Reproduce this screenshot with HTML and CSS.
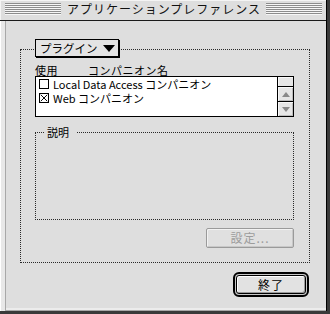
FILE: index.html
```html
<!DOCTYPE html>
<html lang="ja">
<head>
<meta charset="utf-8">
<link rel="stylesheet" href="styles.css">
</head>
<body>
<div class="window">
  <div class="titlebar">
    <div class="stripes"><span class="title">アプリケーションプレファレンス</span></div>
  </div>
  <div class="content">
    <div class="group">
      <div class="popup"><span class="popup-label">プラグイン</span><svg class="tri" width="12" height="7" viewBox="0 0 12 7"><path d="M0 0H12L6 7Z" fill="#000"/></svg></div>
      <div class="headers"><span class="h-use">使用</span><span>コンパニオン名</span></div>
      <div class="list">
        <div class="rows">
          <div class="row"><span class="cb"></span><span class="row-text">Local Data Access コンパニオン</span></div>
          <div class="row"><span class="cb"><svg width="10" height="10" viewBox="0 0 10 10"><path d="M1 1L9 9M9 1L1 9" stroke="#000" stroke-width="1.2"/></svg></span><span class="row-text">Web コンパニオン</span></div>
        </div>
        <div class="scroll">
          <div class="sb-top"></div>
          <div class="sb-btn"><svg width="8" height="5" viewBox="0 0 8 5"><path d="M0 5H8L4 0Z" fill="#8a8a8a"/></svg></div>
          <div class="sb-btn last"><svg width="8" height="5" viewBox="0 0 8 5"><path d="M0 0H8L4 5Z" fill="#8a8a8a"/></svg></div>
        </div>
      </div>
      <div class="desc"><span class="legend">説明</span></div>
      <div class="actions"><div class="btn disabled">設定...</div></div>
    </div>
    <div class="footer">
      <div class="default-ring"><div class="btn primary">終了</div></div>
    </div>
  </div>
</div>
</body>
</html>
```
FILE: styles.css
```css
html, body {
  margin: 0;
  padding: 0;
}
body {
  width: 330px;
  height: 314px;
  background: #3a3a3a;
  font-family: "Noto Sans CJK JP", "DejaVu Sans", sans-serif;
  font-size: 12px;
  color: #000;
  overflow: hidden;
}
.window {
  width: 326px;
  height: 311px;
  background: #dedede;
  border-right: 1px solid #000;
  display: flex;
  flex-direction: column;
}
.titlebar {
  height: 20px;
  border-bottom: 1px solid #1a1a1a;
  background: #dedede;
  box-shadow: inset 1px 1px 0 #f4f4f4;
  display: flex;
  flex-direction: column;
}
.stripes {
  margin: 3px 4px 0 5px;
  height: 12px;
  background: repeating-linear-gradient(to bottom, #8c8c8c 0 1px, #f6f6f6 1px 2px);
  display: flex;
  justify-content: center;
  align-items: center;
}
.title {
  background: #dedede;
  padding: 0 5px 0 6px;
  line-height: 12px;
  height: 12px;
  letter-spacing: 1px;
  color: #111;
  white-space: nowrap;
}
.content {
  flex: 1;
  border-left: 1px solid #fff;
  box-shadow: inset 4px 0 0 #e8e8e8, inset 5px 0 0 #a8a8a8, inset 0 -1px 0 #a8a8a8, inset 0 -3px 0 #ececec;
  display: flex;
  flex-direction: column;
}
.group {
  margin: 28px 0 0 19px;
  width: 290px;
  height: 214px;
  box-sizing: border-box;
  border: 1px dotted #2a2a2a;
  padding: 0 15px 0 14px;
  display: flex;
  flex-direction: column;
}
.popup {
  margin-top: -11px;
  width: 84px;
  height: 18px;
  box-sizing: border-box;
  border: 1px solid #000;
  box-shadow: 1px 1px 0 #000;
  background: #e4e4e4;
  display: flex;
  align-items: center;
  padding: 0 3px 0 4px;
  justify-content: space-between;
  line-height: 14px;
  white-space: nowrap;
}
.popup-label {
  font-size: 11.5px;
}
.tri {
  display: block;
  flex: none;
}
.headers {
  margin-top: 7px;
  height: 12px;
  line-height: 12px;
  font-size: 11px;
  display: flex;
  letter-spacing: 0.5px;
  white-space: nowrap;
}
.h-use {
  width: 53px;
}
.list {
  height: 41px;
  box-sizing: border-box;
  border: 1px solid #000;
  background: #fff;
  display: flex;
}
.rows {
  flex: 1;
  padding: 2px 0 0 3px;
}
.row {
  height: 14px;
  display: flex;
  align-items: flex-start;
  gap: 4px;
  white-space: nowrap;
}
.row-text {
  line-height: 11px;
  font-size: 11px;
}
.cb {
  width: 10px;
  height: 10px;
  box-sizing: border-box;
  border: 1px solid #000;
  background: #fff;
  display: flex;
  align-items: center;
  justify-content: center;
  flex: none;
}
.cb svg {
  display: block;
}
.scroll {
  width: 15px;
  border-left: 1px solid #000;
  background: #e6e6e6;
  display: flex;
  flex-direction: column;
}
.sb-top {
  height: 9px;
  border-bottom: 1px solid #000;
  box-shadow: inset 1px 1px 0 #f8f8f8;
}
.sb-btn {
  height: 14px;
  border-bottom: 1px solid #000;
  display: flex;
  align-items: center;
  justify-content: center;
  box-shadow: inset 1px 1px 0 #f8f8f8, inset -1px -1px 0 #bdbdbd;
}
.sb-btn.last {
  border-bottom: none;
  flex: 1;
}
.desc {
  margin-top: 15px;
  height: 88px;
  box-sizing: border-box;
  border: 1px dotted #2a2a2a;
  display: flex;
  align-items: flex-start;
}
.legend {
  margin: -8px 0 0 8px;
  padding: 0 8px 0 3px;
  background: #dedede;
  line-height: 14px;
  font-size: 11px;
}
.actions {
  margin-top: 8px;
  display: flex;
  justify-content: flex-end;
}
.btn {
  box-sizing: border-box;
  display: flex;
  align-items: center;
  justify-content: center;
  line-height: 14px;
  white-space: nowrap;
}
.btn.disabled {
  width: 88px;
  height: 20px;
  border: 1px solid #9a9a9a;
  border-radius: 2px;
  color: #9c9c9c;
  background: #e0e0e0;
  box-shadow: inset 1px 1px 0 #f2f2f2, inset -1px -1px 0 #c8c8c8;
  letter-spacing: 1px;
}
.footer {
  margin: 9px 0 0 232px;
  display: flex;
}
.default-ring {
  width: 76px;
  height: 25px;
  box-sizing: border-box;
  border: 2px solid #000;
  border-radius: 6px;
  padding: 1px;
  background: #c8c8c8;
  display: flex;
}
.btn.primary {
  flex: 1;
  border: 1px solid #000;
  border-radius: 3px;
  background: #e2e2e2;
  box-shadow: inset 1px 1px 0 #fff, inset -1px -1px 0 #9a9a9a;
  letter-spacing: 1px;
}
```
